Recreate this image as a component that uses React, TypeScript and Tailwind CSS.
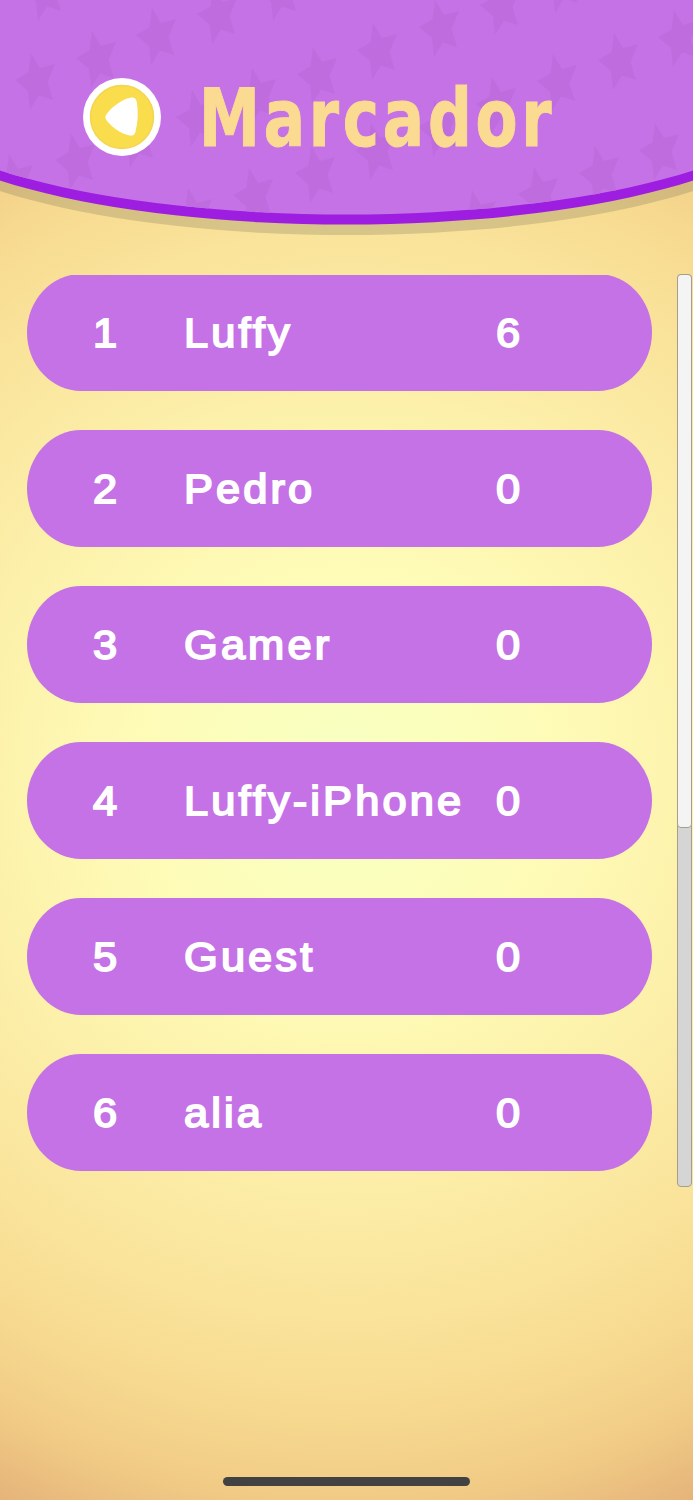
const players = [
  { rank: 1, name: 'Luffy', score: 6 },
  { rank: 2, name: 'Pedro', score: 0 },
  { rank: 3, name: 'Gamer', score: 0 },
  { rank: 4, name: 'Luffy-iPhone', score: 0 },
  { rank: 5, name: 'Guest', score: 0 },
  { rank: 6, name: 'alia', score: 0 },
];

const stars = [
  [44, -7], [279, -7], [218, 16], [157, 37], [97, 60], [36, 82],
  [561, -15], [501, 7], [440, 29], [378, 52], [318, 76], [257, 97], [197, 119], [136, 140], [76, 162], [14, 183],
  [679, 39], [619, 62], [558, 83], [497, 106], [439, 129], [376, 152], [316, 175], [254, 197], [193, 217],
  [660, 152], [600, 175], [539, 196], [477, 219],
];

function HeaderBackdrop() {
  return (
    <svg className="absolute inset-0 h-full w-full" viewBox="0 0 693 240" aria-hidden="true">
      <defs>
        <clipPath id="dome">
          <path d="M-101 -10V94.500A447.500 120 0 0 0 794 94.500V-10Z" />
        </clipPath>
      </defs>
      <path d="M-101 -10V115A447.500 120 0 0 0 794 115V-10Z" fill="#505046" fillOpacity="0.2" />
      <path d="M-101 -10V104.500A447.500 120 0 0 0 794 104.500V-10Z" fill="#9d1ee0" />
      <g clipPath="url(#dome)">
        <rect width="693" height="240" fill="#c572e6" />
        {stars.map(([x, y]) => (
          <path
            key={`${x}-${y}`}
            transform={`translate(${x} ${y})`}
            d="M-5 -29L4 -14L19 -18L11.500 0L17 18L3 13.500L-6 28L-8 9L-21 -2L-7.500 -9.500Z"
            fill="#bf6dde"
          />
        ))}
      </g>
    </svg>
  );
}

function BackButton() {
  return (
    <button type="button" aria-label="Volver" className="h-[78px] w-[78px] shrink-0">
      <svg viewBox="0 0 78 78" className="h-full w-full">
        <circle cx="39" cy="39" r="39" fill="#fff" />
        <circle cx="39" cy="39" r="31.500" fill="#f9dd4c" stroke="#f3d550" strokeWidth="1.500" />
        <path
          d="M24 35.500C30 28 39 21.500 47.500 19.800C51 19 53 20.500 53.800 24C55.500 34 55 44 52.500 53.500C51.500 57 50 58 46.500 57.500C38 55.500 30 50 24 43C21.800 40.200 21.800 38.200 24 35.500Z"
          fill="#fff"
        />
      </svg>
    </button>
  );
}

export default function App() {
  return (
    <main className="relative flex h-[1500px] w-[693px] flex-col overflow-hidden bg-[radial-gradient(circle_at_346px_775px,#f8ffc2_0,#faffbe_80px,#fefbb6_220px,#fcf0aa_380px,#fae39b_540px,#f7da90_635px,#f1cb86_725px,#e3b077_815px)] font-['Liberation_Sans',sans-serif]">
      <header className="relative h-[240px] shrink-0">
        <HeaderBackdrop />
        <div className="relative flex pl-[83px] pt-[78px]">
          <BackButton />
          <h1 className="ml-[38px] mt-[-8px] origin-left scale-x-[0.84] whitespace-nowrap font-['DejaVu_Sans_Condensed','DejaVu_Sans',sans-serif] text-[81px] font-bold leading-[96px] tracking-[4.5px] text-[#fadb91] [-webkit-text-stroke:1px_#fadb91] [stroke-linejoin:round]">
            Marcador
          </h1>
        </div>
      </header>

      <section className="mt-[34px] flex h-[913px] shrink-0 justify-between pl-[27px] pr-px">
        <div className="mt-px h-[912px] w-[625px] overflow-hidden">
          <ol className="-mt-[1.5px] flex flex-col gap-[39px]">
            {players.map((player) => (
              <li
                key={player.rank}
                className="flex h-[117px] items-center rounded-[54px/58.5px] bg-[#c572e6] pl-[66px] pt-px text-[41px] leading-[42px] tracking-[2.9px] text-white [-webkit-text-stroke:1.8px_white]"
              >
                <span className="w-[91px] origin-left scale-x-[1.06]">{player.rank}</span>
                <span className="w-[312px] origin-left scale-x-[1.06] whitespace-nowrap">{player.name}</span>
                <span className="origin-left scale-x-[1.06]">{player.score}</span>
              </li>
            ))}
          </ol>
        </div>
        <div className="h-full w-[15px] rounded-[4px] border border-[#a59f8a] bg-[#d5d5d5]">
          <div className="-mx-px -mt-px h-[554px] rounded-[4px] border border-[#a59f8a] bg-[#f4f4f4]" />
        </div>
      </section>

      <div className="mb-[14px] mt-auto h-[9px] w-[247px] self-center rounded-full bg-[#424242]" />
    </main>
  );
}
